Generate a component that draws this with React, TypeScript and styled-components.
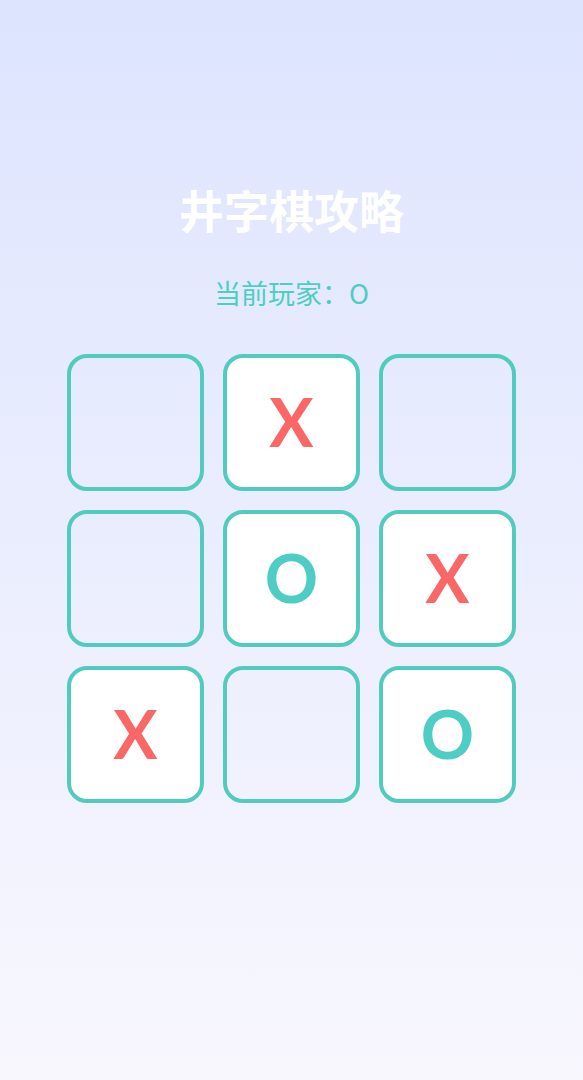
import React from 'react';
import styled, { createGlobalStyle } from 'styled-components';

const GlobalStyle = createGlobalStyle`
  html, body {
    margin: 0;
    padding: 0;
  }
  body {
    font-family: "Noto Sans", "Noto Sans CJK SC", sans-serif;
  }
`;

const Page = styled.div`
  width: 583px;
  height: 1080px;
  background: linear-gradient(180deg, #dde4fe 0%, #f8f7fe 100%);
  display: flex;
  flex-direction: column;
  align-items: center;
  padding-top: 182px;
  box-sizing: border-box;
`;

const Title = styled.h1`
  margin: 0;
  font-family: "Noto Sans CJK SC", sans-serif;
  font-size: 45px;
  font-weight: 700;
  line-height: 56px;
  color: #ffffff;
`;

const Status = styled.div`
  margin-top: 37px;
  font-family: "Noto Sans CJK SC", sans-serif;
  font-size: 27px;
  line-height: 36px;
  color: #4ecdc4;
`;

const Board = styled.div`
  margin-top: 43px;
  display: grid;
  grid-template-columns: repeat(3, 137px);
  grid-auto-rows: 137px;
  gap: 19px;
`;

const Cell = styled.div<{ $filled: boolean }>`
  box-sizing: border-box;
  border: 4px solid #52cbbf;
  border-radius: 20px;
  background: ${(p) => (p.$filled ? '#ffffff' : 'transparent')};
  display: flex;
  align-items: center;
  justify-content: center;
`;

const Mark = styled.span<{ $player: string }>`
  font-family: Lato, "Noto Sans", sans-serif;
  font-size: 66px;
  font-weight: 700;
  line-height: 1;
  padding-bottom: 2px;
  color: ${(p) => (p.$player === 'X' ? '#f96767' : '#4ecdc4')};
`;

const board = ['', 'X', '', '', 'O', 'X', 'X', '', 'O'];

function App() {
  return (
    <Page>
      <GlobalStyle />
      <Title>井字棋攻略</Title>
      <Status>当前玩家：O</Status>
      <Board>
        {board.map((value, index) => (
          <Cell key={index} $filled={value !== ''}>
            {value && <Mark $player={value}>{value}</Mark>}
          </Cell>
        ))}
      </Board>
    </Page>
  );
}

export default App;
